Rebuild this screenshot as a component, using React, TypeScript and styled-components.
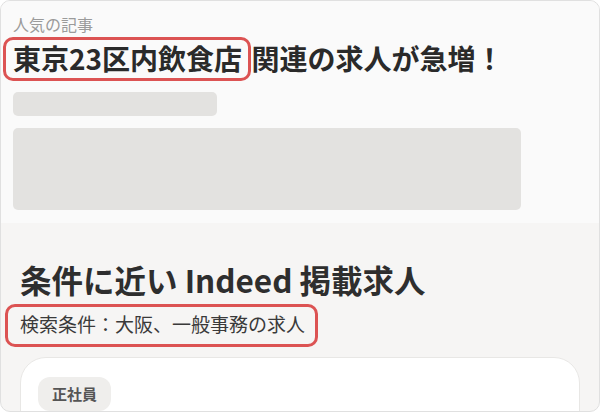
import React from 'react';
import styled, { createGlobalStyle } from 'styled-components';

const GlobalStyle = createGlobalStyle`
  html, body {
    margin: 0;
    padding: 0;
    background: #ffffff;
  }
  body {
    font-family: "Noto Sans CJK JP", "Noto Sans", sans-serif;
  }
  * {
    box-sizing: border-box;
  }
`;

const Frame = styled.div`
  width: 600px;
  height: 412px;
  border: 1px solid #e0e0e0;
  border-radius: 10px;
  overflow: hidden;
  background: #f6f5f4;
`;

const TopSection = styled.section`
  background: #fafafa;
  padding: 12px 12px 13px;
`;

const Label = styled.div`
  font-size: 16px;
  line-height: 22px;
  color: #9b9b9b;
`;

const Headline = styled.h2`
  margin: 3px 0 0;
  font-size: 28px;
  line-height: 40px;
  font-weight: 700;
  color: #2a2a2a;
  white-space: nowrap;
`;

// red annotation frame drawn over the marked words
const Marked = styled.span<{ $inset: string; $space?: number }>`
  position: relative;
  display: inline-block;
  margin-right: ${(p) => p.$space || 0}px;

  &::after {
    content: '';
    position: absolute;
    inset: ${(p) => p.$inset};
    border: 3px solid #dc5353;
    border-radius: 10px;
    pointer-events: none;
  }
`;

const Skeleton = styled.div<{ $w: number; $h: number; $gap: number }>`
  width: ${(p) => p.$w}px;
  height: ${(p) => p.$h}px;
  margin-top: ${(p) => p.$gap}px;
  background: #e3e2e0;
  border-radius: 5px;
`;

const BottomSection = styled.section`
  padding: 35px 19px 0;
`;

const Title = styled.h2`
  margin: 0;
  font-size: 31.5px;
  line-height: 42px;
  font-weight: 700;
  color: #2e2e2e;
  white-space: nowrap;
`;

const Condition = styled.p`
  margin: 10px 0 0;
  font-size: 19px;
  line-height: 28px;
  color: #3a3a3a;
`;

const Card = styled.div`
  margin-top: 19px;
  background: #ffffff;
  border: 1px solid #e8e7e5;
  border-radius: 26px;
  padding: 19px 17px;
  height: 120px;
`;

const Tag = styled.span`
  display: inline-block;
  padding: 6px 14px;
  font-size: 15px;
  line-height: 22px;
  font-weight: 700;
  color: #555555;
  background: #efeeec;
  border-radius: 12px;
`;

const App = () => {
  return (
    <>
      <GlobalStyle />
      <Frame>
        <TopSection>
          <Label>人気の記事</Label>
          <Headline>
            <Marked $inset="-1px -9px -3px -10px" $space={3}>東京23区内飲食店</Marked> 関連の求人が急増！
          </Headline>
          <Skeleton $w={204} $h={24} $gap={14} />
          <Skeleton $w={508} $h={82} $gap={12} />
        </TopSection>
        <BottomSection>
          <Title>条件に近い Indeed 掲載求人</Title>
          <Condition>
            <Marked $inset="-6px -13px -9px -15px">検索条件：大阪、一般事務の求人</Marked>
          </Condition>
          <Card>
            <Tag>正社員</Tag>
          </Card>
        </BottomSection>
      </Frame>
    </>
  );
};

export default App;
